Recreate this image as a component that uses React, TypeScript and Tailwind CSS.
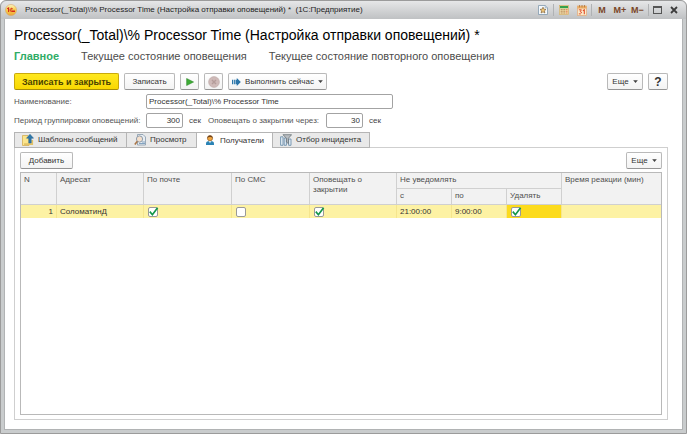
import React from "react";

type IconProps = { className?: string };

const LogoIcon = () => (
  <svg viewBox="0 0 12 12" className="size-3 shrink-0" aria-hidden="true">
    <defs>
      <linearGradient id="logoFill" x1="0" y1="0" x2="0" y2="1">
        <stop offset="0" stopColor="#fdf3c4" />
        <stop offset="0.5" stopColor="#f7cf4a" />
        <stop offset="1" stopColor="#eda63c" />
      </linearGradient>
    </defs>
    <circle cx="6" cy="6" r="5.5" fill="url(#logoFill)" stroke="#d9a765" strokeWidth="0.6" />
    <path d="M2.2 4.8 3.6 3.9V8" fill="none" stroke="#d5281b" strokeWidth="1.1" />
    <path d="M7.6 4.6A1.6 1.6 0 1 0 6.4 7.5H10" fill="none" stroke="#d5281b" strokeWidth="1" />
    <path d="M7.2 5.6A.6.6 0 1 0 6.6 6.4H10" fill="none" stroke="#d5281b" strokeWidth="0.6" />
  </svg>
);

const FavoriteIcon = () => (
  <svg viewBox="0 0 10 10" className="size-[10px]" aria-hidden="true">
    <path d="M.5.5H7.3L9.5 2.7V9.5H.5Z" fill="#f4f8fb" stroke="#8199ad" strokeWidth="0.8" />
    <path d="M7.2.6V2.8H9.4" fill="#dbe5ee" stroke="#8199ad" strokeWidth="0.6" />
    <path d="M5 2.2 5.9 4.2 8 4.4 6.4 5.8 6.9 8 5 6.8 3.1 8 3.6 5.8 2 4.4 4.1 4.2Z" fill="#f2c778" stroke="#826338" strokeWidth="0.7" />
  </svg>
);

const CalculatorIcon = () => (
  <svg viewBox="0 0 10 10" className="size-[10px]" aria-hidden="true">
    <rect x="0.4" y="0.4" width="9.2" height="9.2" fill="#f5e3b0" stroke="#d3b16c" strokeWidth="0.7" />
    <rect x="1" y="1" width="8" height="2.2" fill="#35a04a" />
    <path d="M2.2 4V9M4 4V9M5.8 4V9" stroke="#a06b3c" strokeWidth="0.9" strokeDasharray="1.2 0.5" />
    <path d="M7.9 4V9" stroke="#dd5a33" strokeWidth="1" strokeDasharray="1.2 0.5" />
  </svg>
);

const CalendarIcon = () => (
  <svg viewBox="0 0 10 11" className="h-[11px] w-[10px]" aria-hidden="true">
    <rect x="0.4" y="1" width="9.2" height="9.5" fill="#fbe9c9" stroke="#e2a878" strokeWidth="0.7" />
    <rect x="0.4" y="1" width="9.2" height="2.6" fill="#ecad65" />
    <path d="M2.5 0V2.4M5 0V2.4M7.5 0V2.4" stroke="#a9763f" strokeWidth="0.8" />
    <path d="M1.8 4.8H4.4L3.2 6.5Q4.6 6.6 4.4 8Q4 9.2 1.8 8.9" fill="none" stroke="#e2502c" strokeWidth="1" />
    <path d="M5.9 5.8 7.3 4.8V9.3" fill="none" stroke="#e2502c" strokeWidth="1.1" />
  </svg>
);

const TemplateIcon = ({ className }: IconProps) => (
  <svg viewBox="0 0 12 12" className={className} aria-hidden="true">
    <path d="M.5 1.5H6L7 3V11.5H.5Z" fill="#fbe58c" stroke="#d3af54" strokeWidth="0.8" />
    <path d="M2 10.2H10.2V6" fill="none" stroke="#e2c266" strokeWidth="1.8" />
    <path d="M8 .3 11.5 4.2H9.2V9H6.8V4.2H4.5Z" fill="#2e78ab" stroke="#1e5c8a" strokeWidth="0.5" />
  </svg>
);

const PreviewIcon = ({ className }: IconProps) => (
  <svg viewBox="0 0 12 12" className={className} aria-hidden="true">
    <path d="M3.5.5H9L11.5 3V11H3.5Z" fill="#e8edf2" stroke="#8498aa" strokeWidth="0.8" />
    <path d="M8 8H11M5 9.5H11" stroke="#6a90b4" strokeWidth="0.8" />
    <circle cx="5.5" cy="5" r="3.1" fill="#f5dfcb" stroke="#8d9cab" strokeWidth="1" />
    <path d="M3.4 7.3.8 10.6" stroke="#aa7648" strokeWidth="1.6" />
  </svg>
);

const PersonIcon = ({ className }: IconProps) => (
  <svg viewBox="0 0 10 12" className={className} aria-hidden="true">
    <path d="M1 10V8.4Q1.2 6 5 6Q8.8 6 9 8.4V10Z" fill="#2b83b5" />
    <path d="M3.8 6 5 8.2 6.2 6Z" fill="#eaf3f8" />
    <circle cx="5" cy="3.2" r="2.6" fill="#f0a640" stroke="#7c4a1d" strokeWidth="0.6" />
    <path d="M2.4 3Q2.5.4 5 .4Q7.5.4 7.6 3Q6.5 1.9 5 2Q3.4 1.9 2.4 3Z" fill="#6e431f" />
  </svg>
);

const FilterIcon = ({ className }: IconProps) => (
  <svg viewBox="0 0 12 12" className={className} aria-hidden="true">
    <path d="M.6 2.8H3V11.3H.6ZM4.2 4H6.4V11.3H4.2ZM8.6 5H11V11.3H8.6Z" fill="#e4edf4" stroke="#5f86a6" strokeWidth="0.8" />
    <path d="M3 .7H11.6L8.4 4.3V9.6L6.4 8V4.3Z" fill="#b9bec2" stroke="#5f686e" strokeWidth="0.7" />
  </svg>
);

const RunIcon = () => (
  <svg viewBox="0 0 9 8" className="h-2 w-[9px] shrink-0" aria-hidden="true">
    <path d="M0 1.8H1V6.2H0ZM1.7 1.8H2.9V6.2H1.7ZM3.5 1.8H4.8V0L8.8 4 4.8 8V6.2H3.5Z" fill="#2b75a9" />
  </svg>
);

const Caret = () => (
  <svg viewBox="0 0 5 3" className="h-[3px] w-[5px] shrink-0" aria-hidden="true">
    <path d="M.2.2H4.8L2.5 3Z" fill="#404040" />
  </svg>
);

const buttonBase =
  "flex h-[17px] items-center justify-center rounded-xs border border-[#b9b9b9] border-b-[#949494] bg-linear-to-b from-white to-[#f3f3f3] whitespace-nowrap text-[#333]";

type FieldProps = {
  id: string;
  label: string;
  value: string;
  labelClass: string;
  inputClass: string;
  unit?: string;
};

function Field({ id, label, value, labelClass, inputClass, unit }: FieldProps) {
  return (
    <div className="flex items-center">
      <label htmlFor={id} className={"shrink-0 whitespace-nowrap text-[#555] " + labelClass}>{label}</label>
      <input
        id={id}
        defaultValue={value}
        className={"h-[15px] rounded-xs border border-[#a3a3a3] bg-white px-[2px] text-[#333] outline-none " + inputClass}
      />
      {unit && <span className="ml-[6px] text-[#444]">{unit}</span>}
    </div>
  );
}

function Check({ label, checked }: { label: string; checked?: boolean }) {
  return (
    <span className="relative ml-px block size-[10px]">
      <input
        type="checkbox"
        aria-label={label}
        defaultChecked={checked}
        className="peer block size-[10px] appearance-none rounded-xs border border-[#999] bg-white"
      />
      <svg
        viewBox="0 0 11 11"
        className="pointer-events-none absolute -top-px left-0 hidden size-[11px] peer-checked:block"
        aria-hidden="true"
      >
        <path d="M1.8 5.6 4.4 8.7 9.6 1.8" fill="none" stroke="#12964b" strokeWidth="1.7" />
      </svg>
    </span>
  );
}

const tabs = [
  { title: "Шаблоны сообщений", icon: TemplateIcon, width: "w-[112px]" },
  { title: "Просмотр", icon: PreviewIcon, width: "w-[70px]" },
  { title: "Получатели", icon: PersonIcon, width: "w-[76px]", active: true },
  { title: "Отбор инцидента", icon: FilterIcon, width: "w-[97px]" },
];

const headCell = "border-r border-b border-[#d0d0d0] px-[3px] pt-[2px] text-left align-top font-normal";
const lastHeadCell = "border-b border-[#d0d0d0] px-[3px] pt-[2px] text-left align-top font-normal whitespace-nowrap";
const bodyCell = "border-r border-[#f5e58e] px-[3px] last:border-r-0";

export default function App() {
  return (
    <div className="flex min-h-screen flex-col rounded-t-md border border-[#9b9b9b] bg-[#c9cccd] px-[3px] pb-[3px] font-['Liberation_Sans',Arial,sans-serif] text-[8px] leading-[10px] text-[#4a4a4a]">
      <header className="-mx-[3px] flex h-[18px] shrink-0 items-center rounded-t-md bg-linear-to-b from-[#e6e7e8] to-[#bfc1c3] pr-2 pl-1">
        <LogoIcon />
        <span className="ml-2 whitespace-pre text-[#222]">
          Processor(_Total)\% Processor Time (Настройка отправки оповещений) *  (1С:Предприятие)
        </span>
        <div className="ml-auto flex items-center text-[9px] text-[#7a4527]">
          <button aria-label="Избранное"><FavoriteIcon /></button>
          <span className="mx-[5px] h-3 w-px bg-[#b0b2b4]" />
          <button aria-label="Калькулятор"><CalculatorIcon /></button>
          <button aria-label="Календарь" className="ml-2"><CalendarIcon /></button>
          <span className="mx-1 h-3 w-px bg-[#b0b2b4]" />
          <button className="w-3 font-bold">M</button>
          <button className="ml-[5px] w-[14px] font-bold">M+</button>
          <button className="ml-1 w-[13px] font-bold">M−</button>
          <span className="mx-1 h-3 w-px bg-[#b0b2b4]" />
          <button aria-label="Развернуть" className="h-2 w-[9px] border border-t-2 border-[#555]" />
          <button aria-label="Закрыть" className="ml-2">
            <svg viewBox="0 0 8 8" className="size-2" aria-hidden="true">
              <path d="M1 1 7 7M7 1 1 7" stroke="#3c3c3c" strokeWidth="1.8" />
            </svg>
          </button>
        </div>
      </header>

      <main className="flex flex-1 flex-col border border-t-0 border-[#b1b3b4] bg-white pt-[6px] pr-[14px] pb-[9px] pl-[9px]">
        <h1 className="text-[14px] leading-5 whitespace-nowrap text-black">
          Processor(_Total)\% Processor Time (Настройка отправки оповещений) *
        </h1>
        <nav className="mt-[3px] flex gap-[22px] text-[11px] leading-4 whitespace-nowrap text-[#4c4c4c]">
          <a href="#main" className="font-bold text-[#2fac66]">Главное</a>
          <a href="#state">Текущее состояние оповещения</a>
          <a href="#repeat">Текущее состояние повторного оповещения</a>
        </nav>

        <div className="mt-[9px] flex gap-[5px]">
          <button className="h-[17px] w-[105px] rounded-xs border border-[#c9a90c] border-b-[#a88d06] bg-linear-to-b from-[#ffe81e] to-[#f8d800] text-[9px] font-bold whitespace-nowrap text-[#4a4200]">
            Записать и закрыть
          </button>
          <button className={buttonBase + " w-[51px]"}>Записать</button>
          <button aria-label="Запустить" className={buttonBase + " w-[19px]"}>
            <svg viewBox="0 0 8 8" className="size-2" aria-hidden="true">
              <path d="M.6.4 7.6 4 .6 7.6Z" fill="#3dab35" stroke="#2b8327" strokeWidth="0.5" />
            </svg>
          </button>
          <button aria-label="Остановить" disabled className={buttonBase + " w-[19px]"}>
            <svg viewBox="0 0 12 12" className="size-3" aria-hidden="true">
              <circle cx="6" cy="6" r="5.4" fill="#cfbab8" stroke="#bda9a7" strokeWidth="0.6" />
              <path d="M4 4 8 8M8 4 4 8" stroke="#b49c9a" strokeWidth="1.4" />
            </svg>
          </button>
          <button className={buttonBase + " w-[99px] gap-1"}>
            <RunIcon />
            Выполнить сейчас
            <Caret />
          </button>
          <button className={buttonBase + " ml-auto w-[36px] gap-1"}>
            Еще
            <Caret />
          </button>
          <button aria-label="Справка" className={buttonBase + " w-[20px] text-[12px] font-bold"}>?</button>
        </div>

        <div className="mt-1">
          <Field id="name" label="Наименование:" value="Processor(_Total)\% Processor Time" labelClass="w-[132px]" inputClass="w-[247px]" />
        </div>
        <div className="mt-1 flex gap-[7px]">
          <Field id="period" label="Период группировки оповещений:" value="300" labelClass="w-[132px]" inputClass="w-[37px] text-right" unit="сек" />
          <Field id="close" label="Оповещать о закрытии через:" value="30" labelClass="w-[118px]" inputClass="w-[37px] text-right" unit="сек" />
        </div>

        <div role="tablist" className="mt-1 flex h-[16px] shrink-0 items-stretch border-l border-[#b5b5b5]">
          {tabs.map(({ title, icon: Icon, width, active }) => (
            <button
              key={title}
              role="tab"
              aria-selected={!!active}
              className={
                "flex items-center gap-1 border-t border-r border-[#b5b5b5] pl-[7px] whitespace-nowrap text-[#333] " +
                width +
                (active ? " bg-white" : " border-b bg-[#e9e9e9]")
              }
            >
              <Icon className="size-3 shrink-0" />
              {title}
            </button>
          ))}
          <span className="flex-1 border-b border-[#cfcfcf]" />
        </div>

        <section className="flex flex-1 flex-col border border-t-0 border-[#cfcfcf] px-[5px] pt-1 pb-1">
          <div className="flex justify-between">
            <button className={buttonBase + " w-[53px]"}>Добавить</button>
            <button className={buttonBase + " w-[36px] gap-1"}>
              Еще
              <Caret />
            </button>
          </div>
          <div className="mt-[3px] flex-1 border border-[#b9b9b9]">
            <table className="w-full table-fixed border-separate border-spacing-0">
              <colgroup>
                <col className="w-[36px]" />
                <col className="w-[87px]" />
                <col className="w-[88px]" />
                <col className="w-[78px]" />
                <col className="w-[87px]" />
                <col className="w-[55px]" />
                <col className="w-[55px]" />
                <col className="w-[55px]" />
                <col />
              </colgroup>
              <thead className="bg-[#f2f2f2] text-[#505050]">
                <tr className="h-[16px]">
                  <th rowSpan={2} className={headCell}>N</th>
                  <th rowSpan={2} className={headCell}>Адресат</th>
                  <th rowSpan={2} className={headCell}>По почте</th>
                  <th rowSpan={2} className={headCell}>По СМС</th>
                  <th rowSpan={2} className={headCell}>Оповещать о<br />закрытии</th>
                  <th colSpan={3} className={headCell}>Не уведомлять</th>
                  <th rowSpan={2} className={lastHeadCell}>Время реакции (мин)</th>
                </tr>
                <tr className="h-[16px]">
                  <th className={headCell}>с</th>
                  <th className={headCell}>по</th>
                  <th className={headCell}>Удалять</th>
                </tr>
              </thead>
              <tbody>
                <tr className="h-[13px] bg-[#fdf2a4] text-[#333]">
                  <td className={bodyCell + " text-right"}>1</td>
                  <td className={bodyCell}>СоломатинД</td>
                  <td className={bodyCell}><Check label="По почте" checked /></td>
                  <td className={bodyCell}><Check label="По СМС" /></td>
                  <td className={bodyCell}><Check label="Оповещать о закрытии" checked /></td>
                  <td className={bodyCell}>21:00:00</td>
                  <td className={bodyCell}>9:00:00</td>
                  <td className={bodyCell + " bg-[#fcdb1d]"}><Check label="Удалять" checked /></td>
                  <td className={bodyCell} />
                </tr>
              </tbody>
            </table>
          </div>
        </section>
      </main>
    </div>
  );
}
